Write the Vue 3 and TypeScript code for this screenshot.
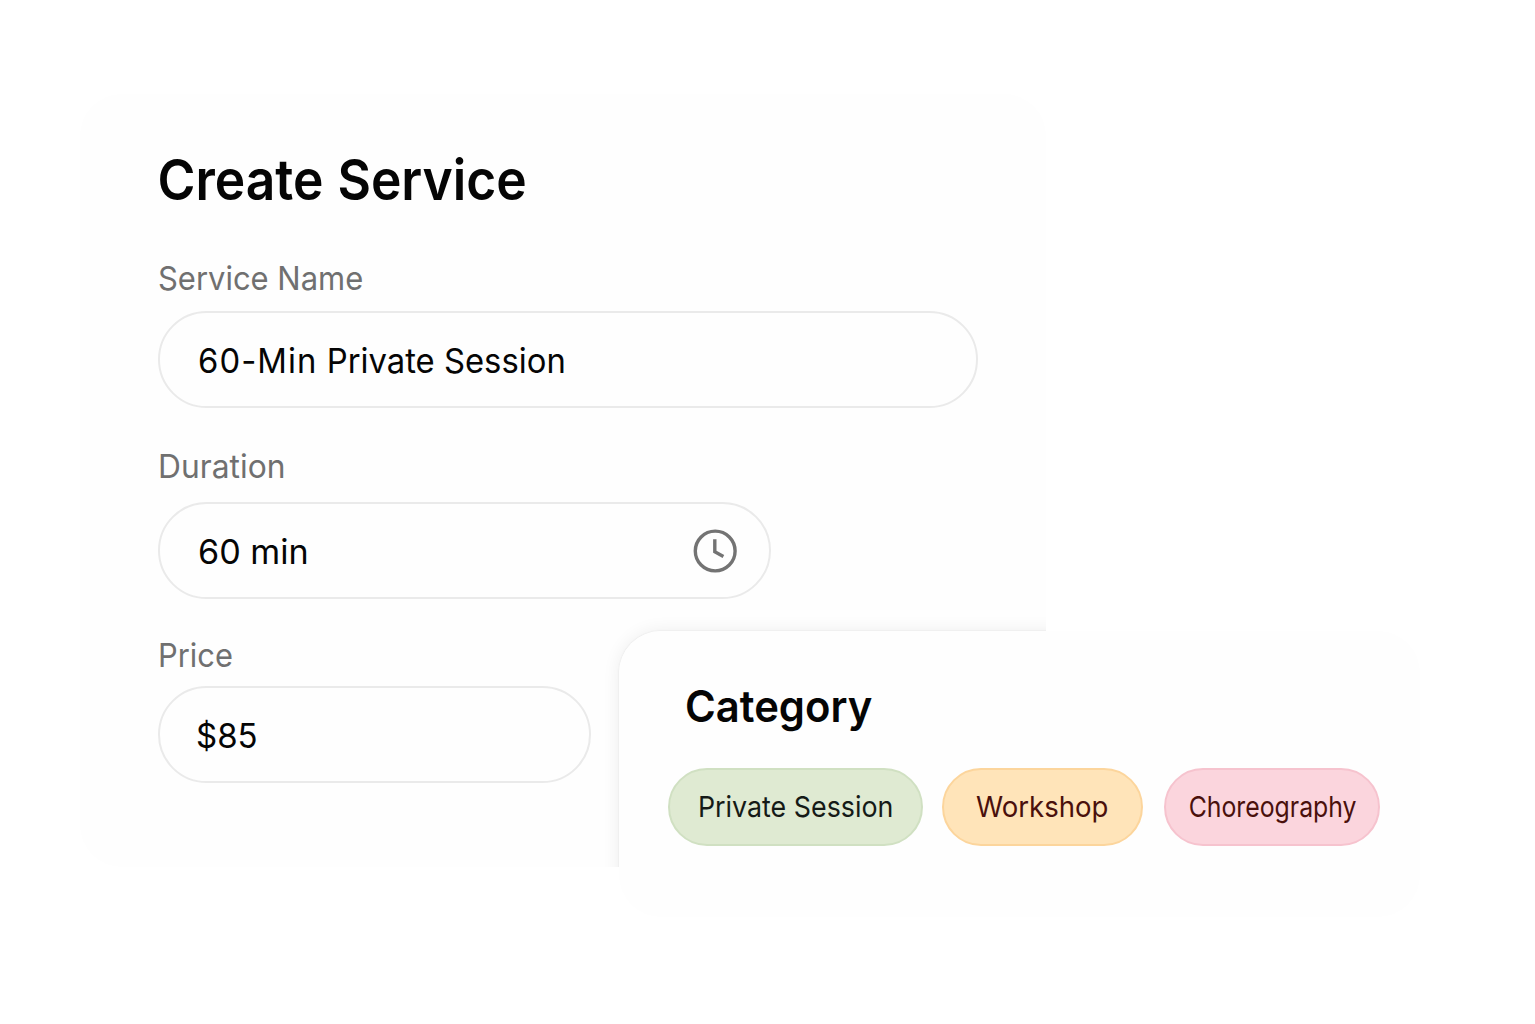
<script setup lang="ts">
interface Chip {
  label: string
  tone: string
}

const chips: Chip[] = [
  { label: 'Private Session', tone: 'green' },
  { label: 'Workshop', tone: 'orange' },
  { label: 'Choreography', tone: 'pink' },
]
</script>

<template>
  <main class="stage">
    <section class="card">
      <h1 class="title"><span>Create Service</span></h1>
      <div class="field name">
        <label><span>Service Name</span></label>
        <div class="input"><span><b>60-Min</b> Private Session</span></div>
      </div>
      <div class="field duration">
        <label><span>Duration</span></label>
        <div class="input">
          <span>60 min</span>
          <svg class="clock" viewBox="0 0 46 46" width="46" height="46" fill="none">
            <circle cx="23.2" cy="23" r="19.9" />
            <path d="M22.8 11.3V23.8l8.6 4.8" />
          </svg>
        </div>
      </div>
      <div class="field price">
        <label><span>Price</span></label>
        <div class="input"><span>$85</span></div>
      </div>
      <div class="panel-shadow"></div>
    </section>

    <section class="panel">
      <h2><span>Category</span></h2>
      <div class="chips">
        <div v-for="chip in chips" :key="chip.label" class="chip" :class="chip.tone">
          <span>{{ chip.label }}</span>
        </div>
      </div>
    </section>
  </main>
</template>

<style>
body {
  background: #ffffff;
}
</style>

<style scoped>
.stage {
  position: relative;
  box-sizing: border-box;
  width: 1535px;
  height: 1024px;
  padding: 94px 0 0 80px;
  overflow: hidden;
  font-family: Inter, 'Liberation Sans', sans-serif;
  color: #050505;
}
.card {
  position: relative;
  box-sizing: border-box;
  width: 966px;
  height: 773px;
  padding: 56px 0 0 78px;
  border-radius: 42px 42px 0 42px;
  background: #fefefe;
  overflow: hidden;
}
span {
  display: inline-block;
  white-space: nowrap;
  transform-origin: left center;
}
.title {
  margin: 0 0 48px -1px;
  font-size: 56px;
  line-height: 60px;
  font-weight: 600;
}
.title span {
  word-spacing: 1px;
  transform: translate(0.5px, 0) scaleX(0.92);
}
label {
  display: block;
  height: 40px;
  font-size: 33px;
  line-height: 40px;
  color: #707070;
}
.input {
  box-sizing: border-box;
  display: flex;
  align-items: center;
  justify-content: space-between;
  height: 97px;
  padding: 3px 31px 0 38px;
  border: 2px solid #eaeaea;
  border-radius: 49px;
  background: #fefefe;
  font-size: 34px;
  line-height: 40px;
}
.name label,
.price label {
  margin-bottom: 13px;
}
.name label span {
  transform: scaleX(0.938);
}
.name .input {
  width: 820px;
}
.name .input span {
  transform: scaleX(0.965);
}
.name .input b {
  font-weight: 400;
  letter-spacing: 1.1px;
}
.duration {
  margin-top: 38px;
}
.duration label {
  margin-bottom: 16px;
}
.duration label span {
  transform: scaleX(0.963);
}
.duration .input {
  width: 613px;
}
.duration .input span {
  transform: scaleX(1.005);
}
.clock {
  margin-top: -3px;
  stroke: #737373;
  stroke-width: 3.4;
}
.price {
  margin-top: 36px;
}
.price label {
  margin-bottom: 11px;
}
.price label span {
  transform: scaleX(0.935);
}
.price .input {
  width: 433px;
  padding-left: 36px;
}
.price .input span {
  transform: scaleX(0.97);
}
.panel-shadow {
  position: absolute;
  left: 539px;
  top: 537px;
  width: 801px;
  height: 287px;
  border-radius: 42px;
  box-shadow: 0 0 2px rgba(0, 0, 0, 0.1), 0 0 18px rgba(0, 0, 0, 0.07);
}
.panel {
  position: absolute;
  left: 619px;
  top: 631px;
  box-sizing: border-box;
  width: 801px;
  height: 286px;
  padding: 50px 0 0 49px;
  border-radius: 42px;
  background: #fefefe;
}
h2 {
  margin: 0 0 37px 17px;
  font-size: 44px;
  line-height: 50px;
  font-weight: 600;
}
h2 span {
  transform: scaleX(0.95);
}
.chips {
  display: flex;
}
.chip {
  box-sizing: border-box;
  display: flex;
  align-items: center;
  justify-content: center;
  height: 78px;
  border: 2px solid;
  border-radius: 39px;
  font-size: 29px;
  line-height: 36px;
}
.chip span {
  transform-origin: center;
}
.green {
  width: 255px;
  background: #dfead2;
  border-color: #d0e0c2;
  color: #151a17;
}
.green span {
  transform: scaleX(0.925);
}
.orange {
  width: 201px;
  margin: 0 21px 0 19px;
  background: #ffe4b9;
  border-color: #fcd59c;
  color: #4a100c;
}
.orange span {
  transform: translateX(-0.5px) scaleX(0.95);
}
.pink {
  width: 216px;
  background: #fbd5dd;
  border-color: #f6c3ce;
  color: #4a100c;
}
.pink span {
  transform: translateX(0.5px) scaleX(0.855);
}
</style>
